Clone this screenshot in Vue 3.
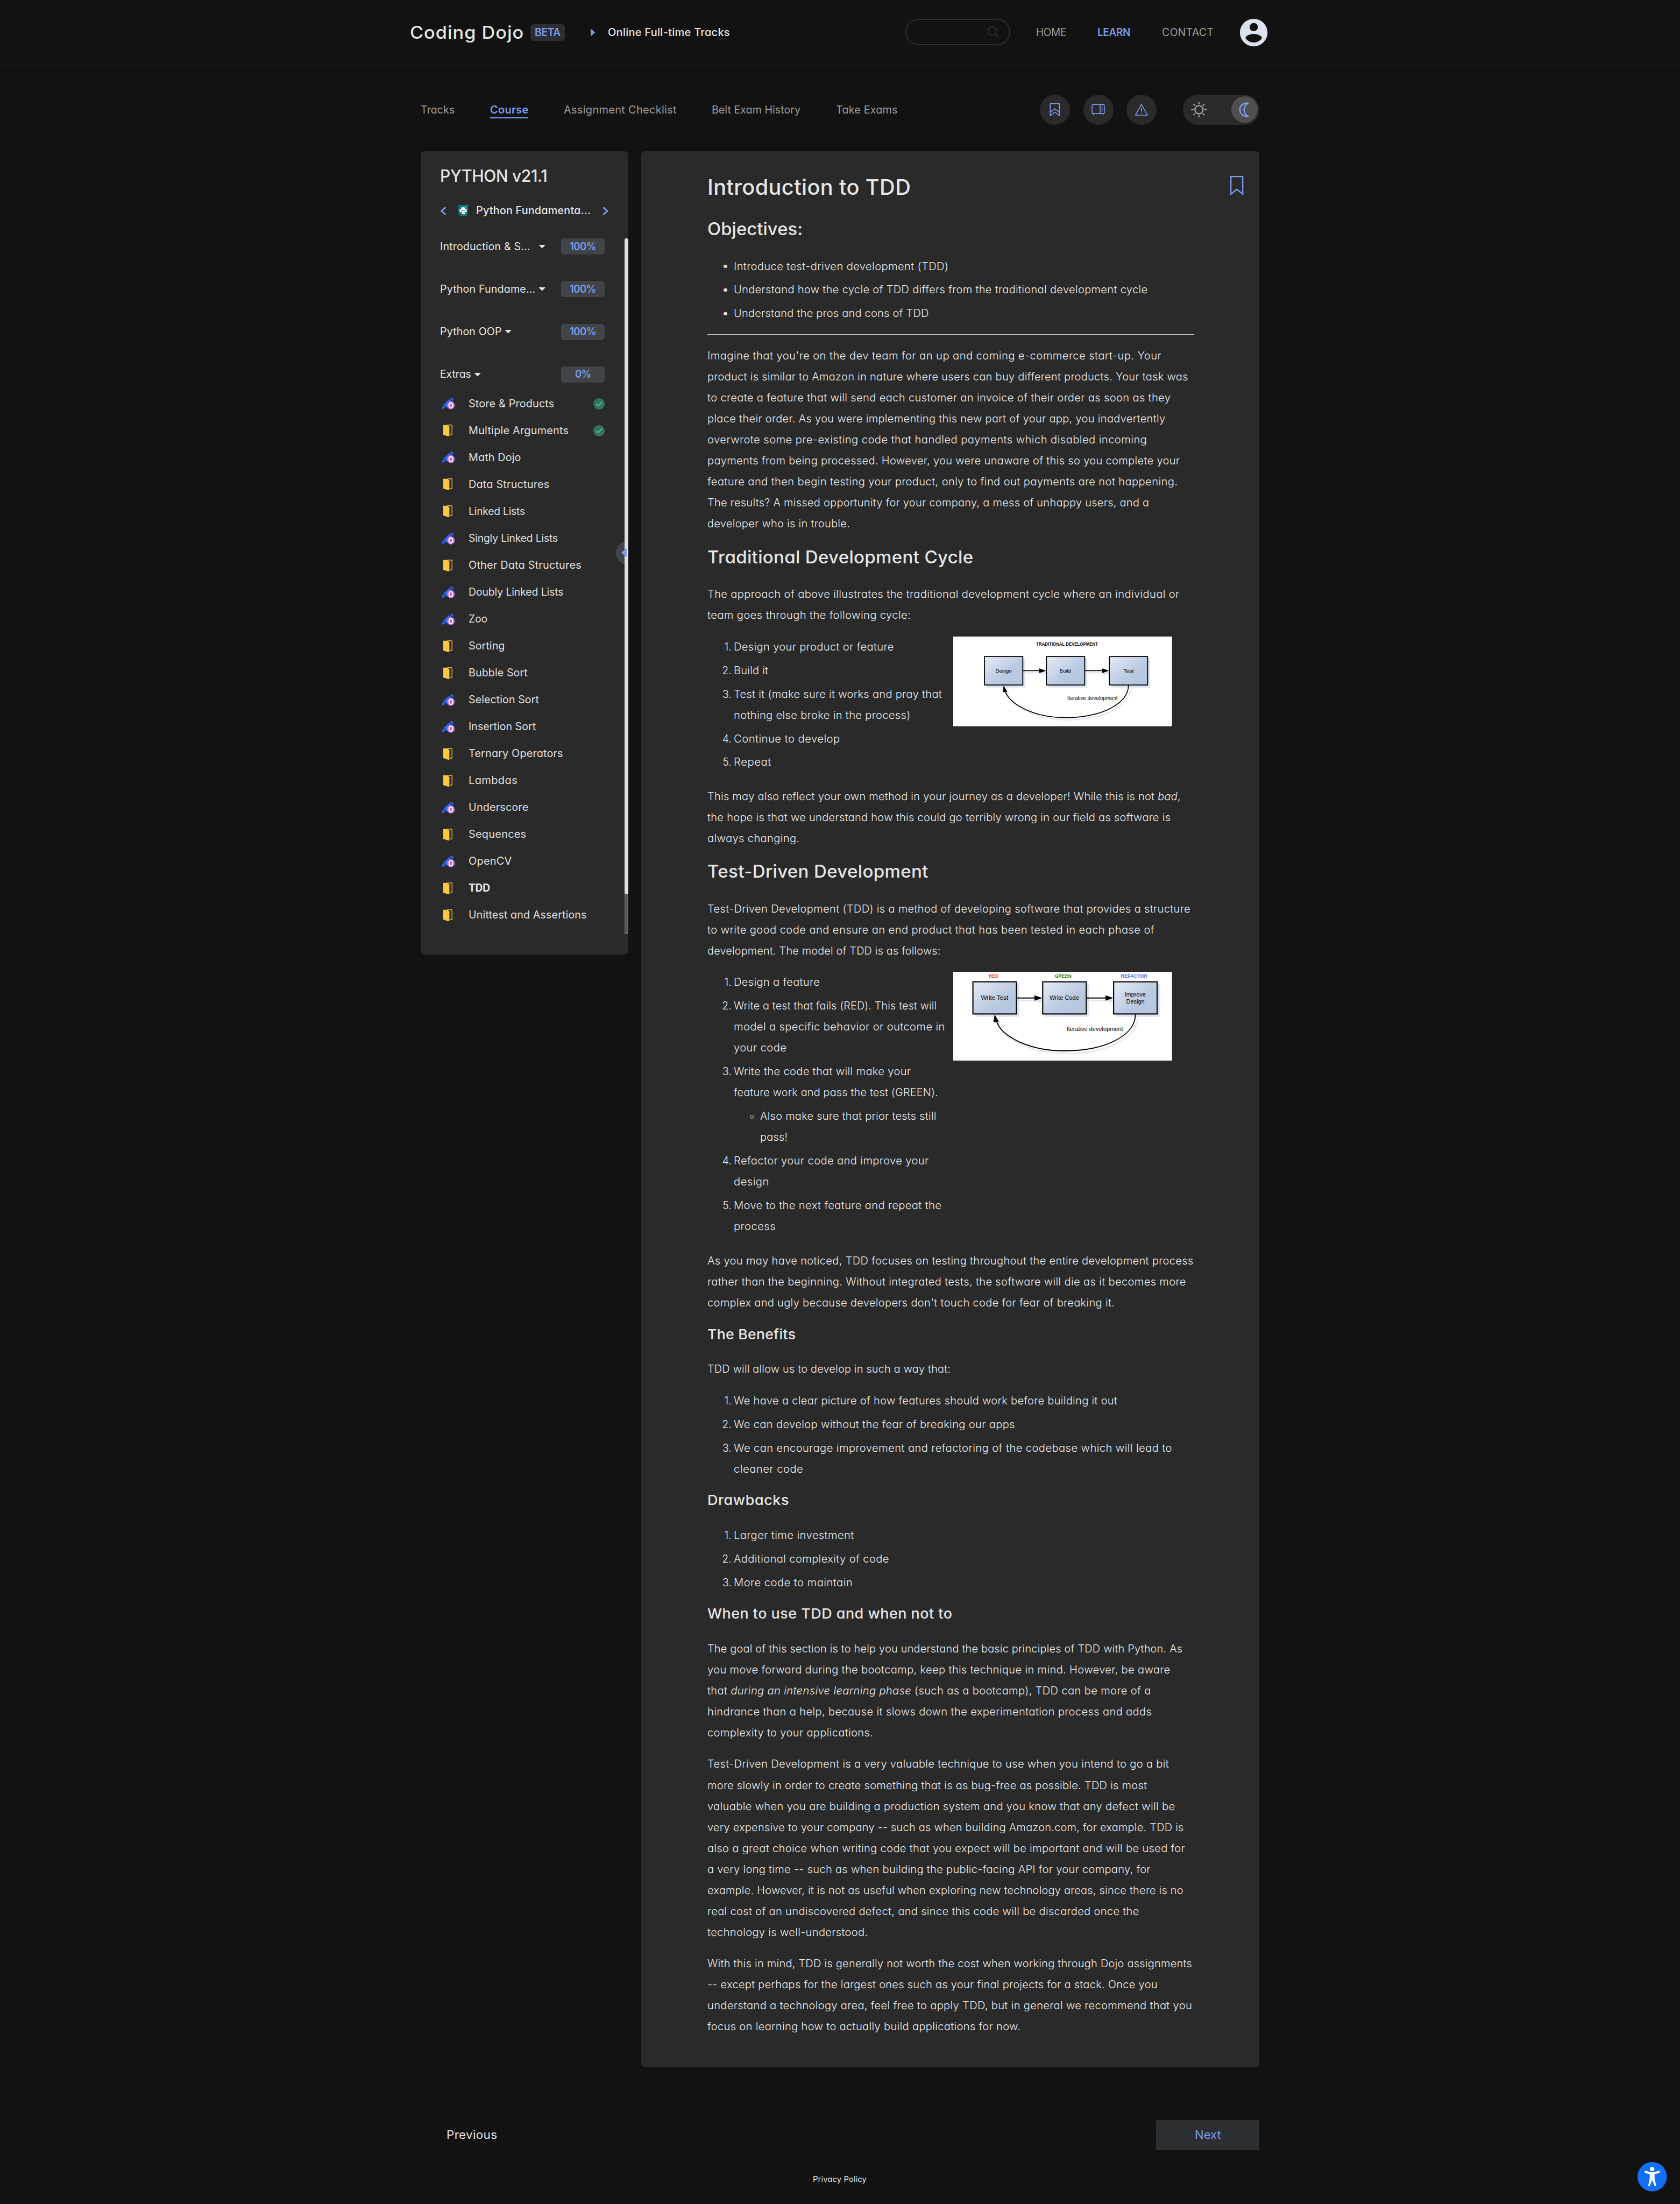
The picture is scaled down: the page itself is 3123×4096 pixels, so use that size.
<script setup>
// Sizes are given on a 3840-unit-wide canvas; 1rem equals 10 of those units.
const vFit = {
  mounted(el, { value }) {
    const unit = document.documentElement.clientWidth / 3840
    const target = value * unit
    const natural = el.getBoundingClientRect().width
    const count = el.textContent.length
    const stretch = Math.sqrt(target / natural)
    const inner = target / stretch
    el.style.letterSpacing = ((inner - natural) / count).toFixed(4) + 'px'
    el.style.width = inner.toFixed(2) + 'px'
    el.style.marginRight = (target - inner).toFixed(2) + 'px'
    el.style.transform = `scaleX(${stretch.toFixed(5)})`
  }
}

const tabs = [
  { label: 'Tracks', w: 78 },
  { label: 'Course', w: 88, active: true },
  { label: 'Assignment Checklist', w: 258 },
  { label: 'Belt Exam History', w: 203 },
  { label: 'Take Exams', w: 141 }
]

const sections = [
  { label: 'Introduction & S...', w: 206, gap: 20, pct: '100%', pw: 60 },
  { label: 'Python Fundame...', w: 218, gap: 8, pct: '100%', pw: 60 },
  { label: 'Python OOP', w: 141, gap: 7, pct: '100%', pw: 60 },
  { label: 'Extras', w: 71, gap: 8, pct: '0%', pw: 36 }
]

const items = [
  { label: 'Store & Products', w: 196, code: true, done: true },
  { label: 'Multiple Arguments', w: 229, done: true },
  { label: 'Math Dojo', w: 120, code: true },
  { label: 'Data Structures', w: 185 },
  { label: 'Linked Lists', w: 129 },
  { label: 'Singly Linked Lists', w: 204, code: true },
  { label: 'Other Data Structures', w: 258 },
  { label: 'Doubly Linked Lists', w: 217, code: true },
  { label: 'Zoo', w: 43, code: true },
  { label: 'Sorting', w: 83 },
  { label: 'Bubble Sort', w: 135 },
  { label: 'Selection Sort', w: 161, code: true },
  { label: 'Insertion Sort', w: 154, code: true },
  { label: 'Ternary Operators', w: 216 },
  { label: 'Lambdas', w: 112 },
  { label: 'Underscore', w: 137, code: true },
  { label: 'Sequences', w: 132 },
  { label: 'OpenCV', w: 99, code: true },
  { label: 'TDD', w: 49, current: true },
  { label: 'Unittest and Assertions', w: 270 }
]

// Text between asterisks is emphasised.
const parts = (s) => s.split('*').map((t, i) => ({ t, em: i % 2 === 1 }))

const blocks = [
  { type: 'h1', lines: [['Introduction to TDD', 465]] },
  { type: 'h2', lines: [['Objectives:', 218]] },
  { type: 'ul', items: [
    [['Introduce test-driven development (TDD)', 491]],
    [['Understand how the cycle of TDD differs from the traditional development cycle', 946]],
    [['Understand the pros and cons of TDD', 446]]
  ] },
  { type: 'hr' },
  { type: 'p', lines: [
    ["Imagine that you're on the dev team for an up and coming e-commerce start-up. Your", 1038],
    ['product is similar to Amazon in nature where users can buy different products. Your task was', 1099],
    ['to create a feature that will send each customer an invoice of their order as soon as they', 1059],
    ['place their order. As you were implementing this new part of your app, you inadvertently', 1047],
    ['overwrote some pre-existing code that handled payments which disabled incoming', 1005],
    ['payments from being processed. However, you were unaware of this so you complete your', 1080],
    ['feature and then begin testing your product, only to find out payments are not happening.', 1075],
    ['The results? A missed opportunity for your company, a mess of unhappy users, and a', 1010],
    ['developer who is in trouble.', 326]
  ] },
  { type: 'h2', lines: [['Traditional Development Cycle', 608]] },
  { type: 'p', lines: [
    ['The approach of above illustrates the traditional development cycle where an individual or', 1079],
    ['team goes through the following cycle:', 465]
  ] },
  { type: 'ol', figure: 'trad', items: [
    [['Design your product or feature', 366]],
    [['Build it', 79]],
    [['Test it (make sure it works and pray that', 476], ['nothing else broke in the process)', 404]],
    [['Continue to develop', 243]],
    [['Repeat', 86]]
  ] },
  { type: 'p', lines: [
    ['This may also reflect your own method in your journey as a developer! While this is not *bad*,', 1082],
    ['the hope is that we understand how this could go terribly wrong in our field as software is', 1059],
    ['always changing.', 211]
  ] },
  { type: 'h2', lines: [['Test-Driven Development', 505]] },
  { type: 'p', lines: [
    ['Test-Driven Development (TDD) is a method of developing software that provides a structure', 1104],
    ['to write good code and ensure an end product that has been tested in each phase of', 1022],
    ['development. The model of TDD is as follows:', 533]
  ] },
  { type: 'ol', figure: 'tdd', items: [
    [['Design a feature', 197]],
    [['Write a test that fails (RED). This test will', 464], ['model a specific behavior or outcome in', 483], ['your code', 121]],
    [['Write the code that will make your', 405], ['feature work and pass the test (GREEN).', 467], ['Also make sure that prior tests still', 403, 'sub'], ['pass!', 63, 'subcont']],
    [['Refactor your code and improve your', 446], ['design', 81]],
    [['Move to the next feature and repeat the', 475], ['process', 96]]
  ] },
  { type: 'p', lines: [
    ['As you may have noticed, TDD focuses on testing throughout the entire development process', 1111],
    ['rather than the beginning. Without integrated tests, the software will die as it becomes more', 1094],
    ["complex and ugly because developers don't touch code for fear of breaking it.", 931]
  ] },
  { type: 'h3', lines: [['The Benefits', 202]] },
  { type: 'p', lines: [['TDD will allow us to develop in such a way that:', 556]] },
  { type: 'ol', items: [
    [['We have a clear picture of how features should work before building it out', 877]],
    [['We can develop without the fear of breaking our apps', 643]],
    [['We can encourage improvement and refactoring of the codebase which will lead to', 1002], ['cleaner code', 159]]
  ] },
  { type: 'h3', after: true, lines: [['Drawbacks', 187]] },
  { type: 'ol', items: [
    [['Larger time investment', 275]],
    [['Additional complexity of code', 355]],
    [['More code to maintain', 272]]
  ] },
  { type: 'h3', after: true, lines: [['When to use TDD and when not to', 560]] },
  { type: 'p', lines: [
    ['The goal of this section is to help you understand the basic principles of TDD with Python. As', 1086],
    ['you move forward during the bootcamp, keep this technique in mind. However, be aware', 1058],
    ['that *during an intensive learning phase* (such as a bootcamp), TDD can be more of a', 1014],
    ['hindrance than a help, because it slows down the experimentation process and adds', 1016],
    ['complexity to your applications.', 379]
  ] },
  { type: 'p', lines: [
    ['Test-Driven Development is a very valuable technique to use when you intend to go a bit', 1055],
    ['more slowly in order to create something that is as bug-free as possible. TDD is most', 1005],
    ['valuable when you are building a production system and you know that any defect will be', 1069],
    ['very expensive to your company -- such as when building Amazon.com, for example. TDD is', 1089],
    ['also a great choice when writing code that you expect will be important and will be used for', 1092],
    ['a very long time -- such as when building the public-facing API for your company, for', 1013],
    ['example. However, it is not as useful when exploring new technology areas, since there is no', 1088],
    ['real cost of an undiscovered defect, and since this code will be discarded once the', 987],
    ['technology is well-understood.', 367]
  ] },
  { type: 'p', lines: [
    ['With this in mind, TDD is generally not worth the cost when working through Dojo assignments', 1108],
    ['-- except perhaps for the largest ones such as your final projects for a stack. Once you', 1029],
    ['understand a technology area, feel free to apply TDD, but in general we recommend that you', 1108],
    ['focus on learning how to actually build applications for now.', 716]
  ] }
]

const tradBoxes = [
  { x: 71.5, label: 'Design', tx: 96.4, tw: 37.2 },
  { x: 213, label: 'Build', tx: 243.2, tw: 25.8 },
  { x: 356.8, label: 'Test', tx: 389, tw: 23.5 }
]
const tddBoxes = [
  { x: 45, lines: [['Write Test', 63.2, 62.5, 64]] },
  { x: 204.5, lines: [['Write Code', 220, 67.5, 64]] },
  { x: 366.6, lines: [['Improve', 392, 48, 56], ['Design', 395.4, 41.8, 72]] }
]
</script>

<template>
  <div class="page">
    <header class="header">
      <span class="brand" v-fit="261">Coding Dojo</span>
      <span class="beta"><span v-fit="59">BETA</span></span>
      <svg class="crumb" viewBox="0 0 10 18"><path d="M0 0L10 9L0 18Z" /></svg>
      <span class="track" v-fit="279">Online Full-time Tracks</span>
      <span class="search">
        <svg viewBox="0 0 28 28"><circle cx="11.5" cy="11.5" r="9.5" /><path d="M18.5 18.5L26.5 27" /></svg>
      </span>
      <nav class="menu">
        <span v-fit="69">HOME</span>
        <span class="on" v-fit="75">LEARN</span>
        <span v-fit="118">CONTACT</span>
      </nav>
      <svg class="avatar" viewBox="2 2 20 20"><path d="M12 2C6.48 2 2 6.48 2 12s4.48 10 10 10 10-4.48 10-10S17.52 2 12 2zm0 3c1.66 0 3 1.34 3 3s-1.34 3-3 3-3-1.34-3-3 1.34-3 3-3zm0 14.2c-2.5 0-4.71-1.28-6-3.22.03-1.99 4-3.08 6-3.08 1.99 0 5.97 1.09 6 3.08-1.29 1.94-3.5 3.22-6 3.22z" /></svg>
    </header>

    <div class="toolbar">
      <nav class="tabs">
        <span v-for="t in tabs" :key="t.label" class="tab" :class="{ active: t.active }"><span v-fit="t.w">{{ t.label }}</span></span>
      </nav>
      <div class="tools">
        <span class="tool">
          <svg viewBox="0 0 34 34"><path d="M6.5 3H27.5V31L17 22.5L6.5 31ZM6.5 23L17 15L27.5 23" /></svg>
        </span>
        <span class="tool">
          <svg viewBox="0 0 34 34"><rect x="2.500" y="5" width="28" height="21" rx="2" /><path d="M21 5V26M6 26L5 29.500M27 26L28 29.500" /><path d="M25.500 9V22" stroke-dasharray="2 1.500" /></svg>
        </span>
        <span class="tool">
          <svg viewBox="0 0 34 34"><path d="M17 5L30.500 29.500H3.500Z" /><path d="M17 13V21.500M17 24V26" /></svg>
        </span>
        <span class="toggle">
          <svg class="sun" viewBox="0 0 34 34"><circle cx="17" cy="17" r="9.300" /><path d="M17 .5V3.500M17 30.500V33.500M.5 17H3.500M30.500 17H33.500M5.300 5.300L7.400 7.400M26.600 26.600L28.700 28.700M5.300 28.700L7.400 26.600M26.600 7.400L28.700 5.300" /></svg>
          <span class="thumb">
            <svg viewBox="0 0 34 34"><path d="M25 2C13 .5 6 8 6 17S13 33.500 25 32C18.500 29 15.500 23.500 15.500 17S18.500 5 25 2Z" /></svg>
          </span>
        </span>
      </div>
    </div>

    <main class="main">
      <aside class="side">
        <div class="side-title"><span v-fit="245">PYTHON v21.1</span></div>
        <div class="side-nav">
          <svg class="chev" viewBox="0 0 13 20"><path d="M11.500 1.500L2 10L11.500 18.500" /></svg>
          <svg class="py" viewBox="0 0 24 26">
            <path d="M0 0H24L22 23.500L12 26L2 23.500Z" fill="#067076" />
            <path d="M12 1.500H22.500L20.700 22.500L12 24.500Z" fill="#1f8a8e" />
            <path d="M8 8.500V6.500Q8 5 10 5H14Q16 5 16 7V10.500Q16 12.500 14 12.500H10Q8 12.500 8 14.500V16.500H6Q4 16.500 4 14.500V11Q4 9.500 6 9.500H12V8.500ZM17 9.500H18.500Q20.500 9.500 20.500 11.500V14.500Q20.500 16.500 18.500 16.500H12.500V17.500H16.500V19Q16.500 20.500 14.500 20.500H10.500Q9 20.500 9 19V15.500Q9 13.500 11 13.500H15Q17 13.500 17 11.500Z" fill="#fff" />
          </svg>
          <span class="chapter"><span v-fit="262">Python Fundamenta...</span></span>
          <svg class="chev" viewBox="0 0 13 20"><path d="M1.500 1.500L11 10L1.500 18.500" /></svg>
        </div>

        <div v-for="s in sections" :key="s.label" class="section">
          <span v-fit="s.w">{{ s.label }}</span>
          <svg class="caret" :style="{ marginLeft: s.gap / 10 + 'rem' }" viewBox="0 0 14 8"><path d="M0 0H14V1L7 8L0 1Z" /></svg>
          <span class="pct"><span v-fit="s.pw">{{ s.pct }}</span></span>
        </div>

        <ul class="items">
          <li v-for="i in items" :key="i.label" :class="{ current: i.current }">
            <span class="ico">
              <svg v-if="i.code" class="pencil" viewBox="0 0 30 27">
                <path d="M17.500 3.500L24.500 9L10.500 22L4 16ZM19 2L21.500 .3Q23 -.3 24.500 1L26.500 3Q27.500 4.500 26.500 6L25.500 7.500ZM3 17L9 22.500L0 26.500Z" fill="#2a66f5" />
                <circle cx="21" cy="17.500" r="9.200" fill="#b565dc" />
                <rect x="17" y="11.800" width="8" height="11.500" rx="4" fill="none" stroke="#fff" stroke-width="2.600" />
              </svg>
              <svg v-else class="book" viewBox="0 0 21 27">
                <path d="M9 1H18.500Q20 1 20 2.500V22Q20 23.500 18.500 23.500H15" fill="none" stroke="#d9ab3b" stroke-width="2" />
                <path d="M0 .8H8.500L14 4.500V26.500L11.500 27L0 23.300Z" fill="#fbc83e" />
              </svg>
            </span>
            <span v-fit="i.w">{{ i.label }}</span>
            <svg v-if="i.done" class="done" viewBox="0 0 26 26">
              <circle cx="13" cy="13" r="13" fill="#3a6f60" />
              <path d="M7.500 13.500L11.500 17.500L19 9" fill="none" stroke="#13e07d" stroke-width="2.600" stroke-linecap="round" stroke-linejoin="round" />
            </svg>
          </li>
        </ul>

        <div class="scroll"><div class="scroll-thumb"></div></div>
        <div class="collapse"><svg viewBox="0 0 12 20"><path d="M0 10L10 .8Q12 -.5 12 1V19Q12 20.500 10 19.200Z" /></svg></div>
      </aside>

      <article class="content">
        <svg class="mark" viewBox="0 0 30 45"><path d="M1.500 1.500H28.500V41.500L15 30.500L1.500 41.500Z" /></svg>
        <template v-for="(b, n) in blocks" :key="n">
          <hr v-if="b.type === 'hr'" />
          <div v-else-if="b.items" class="row">
            <component :is="b.type" class="list" :class="{ narrow: b.figure }">
              <li v-for="(it, k) in b.items" :key="k">
                <span class="marker" :class="{ dot: b.type === 'ul' }">{{ b.type === 'ol' ? k + 1 + '.' : '' }}</span>
                <div v-for="l in it" :key="l[0]" class="line" :class="l[2]">
                  <span v-fit="l[1]">{{ l[0] }}</span>
                </div>
              </li>
            </component>

            <svg v-if="b.figure === 'trad'" class="fig trad" viewBox="0 0 500 205">
              <defs>
                <linearGradient id="gt" x1="0" y1="0" x2="1" y2="1"><stop offset="0" stop-color="#e8ecf5" /><stop offset=".6" stop-color="#b8c9e1" /><stop offset="1" stop-color="#b4c6df" /></linearGradient>
              </defs>
              <rect width="500" height="205" fill="#fff" />
              <g fill="none" stroke="#dfe5f3" stroke-width="2.500">
                <path d="M405.500 116C405.500 160 340 190.500 262 190.500C190 190.500 133 160 123.500 131" />
                <path d="M164 83H205M306 83H348" />
              </g>
              <path d="M202 77.500L218 83L202 88.500ZM345 77.500L361 83L345 88.500ZM120 117L118.200 132.500L128.600 130.500Z" fill="#dfe5f3" />
              <rect v-for="x in tradBoxes" :key="'s' + x.x" :x="x.x + 4.500" y="50.500" width="88.500" height="66" fill="#dde4f1" />
              <g v-for="x in tradBoxes" :key="x.x">
                <rect :x="x.x" y="45.700" width="87.500" height="65" fill="url(#gt)" stroke="#000" stroke-width="2.200" />
                <text :x="x.tx" y="82" font-size="12" :textLength="x.tw" lengthAdjust="spacingAndGlyphs">{{ x.label }}</text>
              </g>
              <path d="M400.500 111C400.500 155 335 185.300 257 185.300C185 185.300 128 155 118.300 124" fill="none" stroke="#000" stroke-width="2" />
              <path d="M159 78H200M300.500 78H343" stroke="#000" stroke-width="2.300" />
              <path d="M196 72.500L212.500 78L196 83.500ZM340 72.500L356 78L340 83.500ZM115 112L113.200 127.300L123.600 125.700Z" />
              <text x="189.600" y="20.300" font-size="10.500" font-weight="700" textLength="141" lengthAdjust="spacingAndGlyphs">TRADITIONAL DEVELOPMENT</text>
              <text x="260.700" y="144.700" font-size="12.500" textLength="115" lengthAdjust="spacingAndGlyphs">Iterative development</text>
            </svg>

            <svg v-if="b.figure === 'tdd'" class="fig tdd" viewBox="0 0 500 203">
              <rect width="500" height="203" fill="#fff" />
              <g fill="none" stroke="#dfe5f3" stroke-width="2.800">
                <path d="M422 102C422 153 348 186.500 260 186.500C180 186.500 116 155 104 121" />
                <path d="M149 65.500H194M309 65.500H356" />
              </g>
              <path d="M192 59.500L209 65.500L192 71.500ZM353 59.500L371 65.500L353 71.500ZM100 103L97.500 121L109.500 119.500Z" fill="#dfe5f3" />
              <rect v-for="x in tddBoxes" :key="'s' + x.x" :x="x.x + 5" y="28" width="101" height="75" fill="#dde4f1" />
              <g v-for="x in tddBoxes" :key="x.x">
                <rect :x="x.x" y="22.900" width="99.500" height="73.500" fill="url(#gt)" stroke="#000" stroke-width="2.600" />
                <text v-for="t in x.lines" :key="t[0]" :x="t[1]" :y="t[3]" font-size="13.500" :textLength="t[2]" lengthAdjust="spacingAndGlyphs">{{ t[0] }}</text>
              </g>
              <path d="M416.400 97C416.400 148 343 180.700 255 180.700C175 180.700 110 149 98.500 112" fill="none" stroke="#000" stroke-width="2.300" />
              <path d="M144.500 60H190M304 60H352" stroke="#000" stroke-width="2.600" />
              <path d="M185.700 53.700L204 60L185.700 66ZM348 53.700L366 60L348 66ZM94.600 97.300L91.800 115.300L104 113.700Z" />
              <g font-size="11.800" font-weight="700">
                <text x="81.400" y="13.700" fill="#f0392b" textLength="22.200" lengthAdjust="spacingAndGlyphs">RED</text>
                <text x="232" y="13.700" fill="#2c7a1c" textLength="38.400" lengthAdjust="spacingAndGlyphs">GREEN</text>
                <text x="383" y="13.700" fill="#3e6cf5" textLength="61" lengthAdjust="spacingAndGlyphs">REFACTOR</text>
              </g>
              <text x="259" y="135" font-size="14" textLength="129" lengthAdjust="spacingAndGlyphs">Iterative development</text>
            </svg>
          </div>
          <component :is="b.type" v-else :class="{ after: b.after }">
            <span v-for="l in b.lines" :key="l[0]" class="line">
              <span v-fit="l[1]"><template v-for="(s, j) in parts(l[0])" :key="j"><em v-if="s.em">{{ s.t }}</em><template v-else>{{ s.t }}</template></template></span>
            </span>
          </component>
        </template>
      </article>
    </main>

    <div class="pager">
      <span class="prev" v-fit="116">Previous</span>
      <span class="next"><span v-fit="60">Next</span></span>
    </div>
    <footer class="foot"><span v-fit="123">Privacy Policy</span></footer>

    <div class="a11y">
      <svg viewBox="0 0 67 67">
        <circle cx="33.500" cy="33.500" r="33.500" fill="#146ff8" />
        <circle cx="33.500" cy="16" r="5" fill="#fff" />
        <path d="M18.500 22.500Q33.500 28.500 48.500 22.500" fill="none" stroke="#fff" stroke-width="5" stroke-linecap="round" />
        <path d="M28 24H39V37L42.500 54L39.500 55.500L33.500 41L27.500 55.500L24.500 54L28 37Z" fill="#fff" />
      </svg>
    </div>
  </div>
</template>

<style>
html {
  font-size: calc(100vw / 384);
  background: #121212;
}
body {
  margin: 0;
}
</style>

<style scoped>
.page {
  position: relative;
  width: 384rem;
  height: 100vh;
  overflow: hidden;
  background: #121212;
  color: #e6e6e6;
  font-family: Inter, "Liberation Sans", sans-serif;
  font-feature-settings: "cv11";
  font-size: 2.4rem;
  line-height: 1.5;
}
.page span {
  display: inline-block;
  white-space: pre;
  transform-origin: 0 50%;
}
svg {
  display: block;
  flex: none;
  overflow: visible;
}
.header {
  display: flex;
  align-items: center;
  box-sizing: border-box;
  height: 15rem;
  padding-left: 93.7rem;
  border-bottom: 0.1rem solid #1d1d1d;
}
.brand {
  font-size: 4rem;
  font-weight: 500;
}
.beta {
  display: inline-flex !important;
  align-items: center;
  justify-content: center;
  width: 7.8rem;
  height: 3.9rem;
  margin-left: 1.5rem;
  border-radius: 0.8rem;
  background: #2b2e33;
  color: #7c9cee;
  font-weight: 600;
}
.crumb {
  width: 1rem;
  height: 1.8rem;
  margin-left: 5.9rem;
  fill: #7c9cee;
}
.track {
  margin-left: 2.9rem;
  font-weight: 500;
}
.search {
  display: flex !important;
  align-items: center;
  justify-content: flex-end;
  box-sizing: border-box;
  width: 24rem;
  height: 6rem;
  margin: -0.3rem 0 0 40.1rem;
  padding-right: 2.2rem;
  border: 0.3rem solid #2c2f33;
  border-radius: 3rem;
}
.search svg {
  width: 2.8rem;
  height: 2.8rem;
  fill: none;
  stroke: #2d2d2d;
  stroke-width: 2.6;
}
.menu {
  display: flex;
  gap: 7.2rem;
  margin: 0 6.1rem 0 5.9rem;
  color: #9d9d9d;
}
.menu .on {
  color: #7c9cee;
  font-weight: 600;
}
.avatar {
  width: 6.3rem;
  height: 6.3rem;
  fill: #dde3ee;
}
.toolbar {
  display: flex;
  justify-content: space-between;
  align-items: center;
  width: 191.8rem;
  height: 6.9rem;
  margin: 6.6rem 0 6rem 96.1rem;
}
.tabs {
  display: flex;
  gap: 8.08rem;
  color: #9d9d9d;
}
.tab {
  border: 0.3rem solid transparent;
  border-width: 0.3rem 0;
  line-height: 3.4rem;
  margin-top: 0.2rem;
}
.tab.active {
  border-bottom-color: #7c9cee;
  color: #7c9cee;
  font-weight: 600;
}
.tools {
  display: flex;
  gap: 3rem;
}
.tool {
  display: flex !important;
  align-items: center;
  justify-content: center;
  width: 6.9rem;
  height: 6.9rem;
  border-radius: 50%;
  background: #2a2a2a;
}
.tool svg {
  width: 3.4rem;
  height: 3.4rem;
  fill: none;
  stroke: #7c9cee;
  stroke-width: 2;
  stroke-linejoin: round;
}
.toggle {
  display: flex !important;
  align-items: center;
  justify-content: space-between;
  box-sizing: border-box;
  width: 17.5rem;
  height: 6.9rem;
  margin-left: 3rem;
  padding: 0 0.4rem 0 2rem;
  border-radius: 3.5rem;
  background: #2a2a2a;
}
.sun {
  width: 3.4rem;
  height: 3.4rem;
  fill: none;
  stroke: #b0b0b0;
  stroke-width: 2.6;
  stroke-linecap: round;
}
.thumb {
  display: flex !important;
  align-items: center;
  justify-content: center;
  width: 6rem;
  height: 6rem;
  border-radius: 50%;
  background: #4f4f4f;
}
.thumb svg {
  width: 3.4rem;
  height: 3.4rem;
  fill: none;
  stroke: #7c9cee;
  stroke-width: 3;
  stroke-linejoin: round;
}
.main {
  display: flex;
  align-items: flex-start;
  gap: 3rem;
  margin-left: 96.1rem;
}
.side {
  position: relative;
  box-sizing: border-box;
  width: 47.5rem;
  height: 183.6rem;
  padding: 2.8rem 5.4rem 0 4.5rem;
  border-radius: 0.9rem;
  overflow: hidden;
  background: #2a2a2a;
}
.side-title {
  height: 6rem;
  line-height: 6rem;
  font-size: 3.8rem;
  font-weight: 500;
}
.side-nav {
  display: flex;
  align-items: center;
  width: 38.4rem;
  height: 4rem;
  margin: 2.9rem 0 4.3rem;
  font-weight: 500;
}
.chev {
  width: 1.3rem;
  height: 2rem;
  margin-left: 0.1rem;
  fill: none;
  stroke: #7c9cee;
  stroke-width: 3.4;
}
.py {
  width: 2.4rem;
  height: 2.6rem;
  margin: 0 1.8rem 0 2.6rem;
}
.chapter {
  margin-right: 2.6rem;
}
.section {
  display: flex;
  align-items: center;
  height: 3.7rem;
  margin-bottom: 6.04rem;
}
.caret {
  width: 1.4rem;
  height: 0.8rem;
  fill: #e4e4e4;
}
.pct {
  display: flex !important;
  align-items: center;
  justify-content: center;
  width: 10rem;
  height: 3.7rem;
  margin-left: auto;
  border-radius: 0.7rem;
  background: #414448;
  color: #7c9cee;
  font-weight: 600;
}
.items {
  margin: -4.25rem 0 0;
  padding: 0;
  list-style: none;
  color: #e0e0e0;
  font-weight: 400;
}
.items li {
  display: flex;
  align-items: center;
  height: 6.15rem;
}
.items .current {
  color: #e8e8e8;
  font-weight: 700;
}
.ico {
  width: 6.5rem;
}
.pencil {
  width: 3rem;
  height: 2.7rem;
  margin-left: 0.4rem;
}
.book {
  width: 2.1rem;
  height: 2.7rem;
  margin-left: 0.7rem;
}
.done {
  width: 2.6rem;
  height: 2.6rem;
  margin-left: auto;
}
.scroll {
  position: absolute;
  top: 20rem;
  right: 0;
  width: 0.9rem;
  height: 159rem;
  border-radius: 0.5rem;
  background: #4a4a4a;
  box-shadow: inset 0 0 0.5rem #a0a0a0;
}
.scroll-thumb {
  height: 149.9rem;
  border-radius: 0.5rem;
  background: #e0e0e0;
}
.collapse {
  position: absolute;
  top: 89.1rem;
  left: 44.7rem;
  width: 5.5rem;
  height: 5.5rem;
  border-radius: 50%;
  background: rgba(208, 225, 252, 0.14);
}
.collapse svg {
  width: 1.2rem;
  height: 2rem;
  margin: 1.7rem 0 0 1.2rem;
  fill: #7c9cee;
}
.content {
  position: relative;
  box-sizing: border-box;
  width: 141.3rem;
  height: 437.9rem;
  padding: 4.75rem 15.1rem 0;
  border-radius: 0.9rem;
  background: #2a2a2a;
  font-weight: 300;
}
.mark {
  position: absolute;
  top: 5.7rem;
  right: 3.7rem;
  width: 3rem;
  height: 4.5rem;
  fill: none;
  stroke: #7c9cee;
  stroke-width: 2.8;
}
.line {
  display: block !important;
}
h1,
h2,
h3 {
  margin: 0;
  font-weight: 500;
}
h1 {
  font-size: 4.8rem;
  line-height: 7.2rem;
  margin-bottom: 3.13rem;
}
h2 {
  font-size: 4rem;
  line-height: 5.5rem;
  margin-bottom: 3.4rem;
}
h3 {
  font-size: 3.2rem;
  line-height: 4.5rem;
  margin: 2.6rem 0 3.3rem;
}
h3.after {
  margin-top: -0.45rem;
}
h1 .line,
h2 .line,
h3 .line {
  line-height: inherit;
}
p {
  margin: 0 0 2.4rem;
  line-height: 4.8rem;
}
p,
.list {
  color: #ececec;
  font-weight: 320;
}
p .line,
li .line {
  height: 4.8rem;
}
hr {
  height: 0.12rem;
  margin: -0.75rem 0 2.5rem;
  border: 0;
  background: #d8d8d8;
}
.row {
  display: flex;
  align-items: flex-start;
}
.list {
  width: 100%;
  margin: 0 0 2.4rem;
  padding: 0 0 0 6rem;
  list-style: none;
  line-height: 4.8rem;
  box-sizing: border-box;
}
.narrow {
  width: 56.2rem;
}
.list li {
  position: relative;
  margin-bottom: 0.6rem;
}
.list .marker {
  position: absolute;
  right: 100%;
  padding-right: 0.5rem;
}
.list .dot {
  top: 2rem;
  width: 0.8rem;
  height: 0.8rem;
  margin-right: 1.5rem;
  padding: 0;
  border-radius: 50%;
  background: #e4e4e4;
}
.line.sub {
  position: relative;
  margin-top: 0.6rem;
  padding-left: 6rem;
}
.line.sub::before {
  content: "";
  position: absolute;
  left: 3.7rem;
  top: 2rem;
  width: 0.65rem;
  height: 0.65rem;
  border: 0.14rem solid #dcdcdc;
  border-radius: 50%;
}
.line.subcont {
  padding-left: 6rem;
}
.fig {
  width: 50rem;
  font-family: "Liberation Sans", Arial, sans-serif;
  font-weight: 400;
}
.fig.trad {
  height: 20.5rem;
}
.fig.tdd {
  height: 20.3rem;
}
.pager {
  display: flex;
  align-items: center;
  justify-content: space-between;
  width: 185.8rem;
  height: 6.9rem;
  margin: 12rem 0 0 102.1rem;
  font-size: 2.7rem;
}
.next {
  display: flex !important;
  align-items: center;
  justify-content: center;
  width: 23.7rem;
  height: 6.9rem;
  border-radius: 0.5rem;
  background: #2b2e33;
  color: #7c9cee;
}
.foot {
  margin: 5.5rem 0 0 185.8rem;
  font-size: 1.8rem;
}
.a11y {
  position: absolute;
  right: 3rem;
  top: 494rem;
  width: 6.7rem;
  height: 6.7rem;
}
</style>
